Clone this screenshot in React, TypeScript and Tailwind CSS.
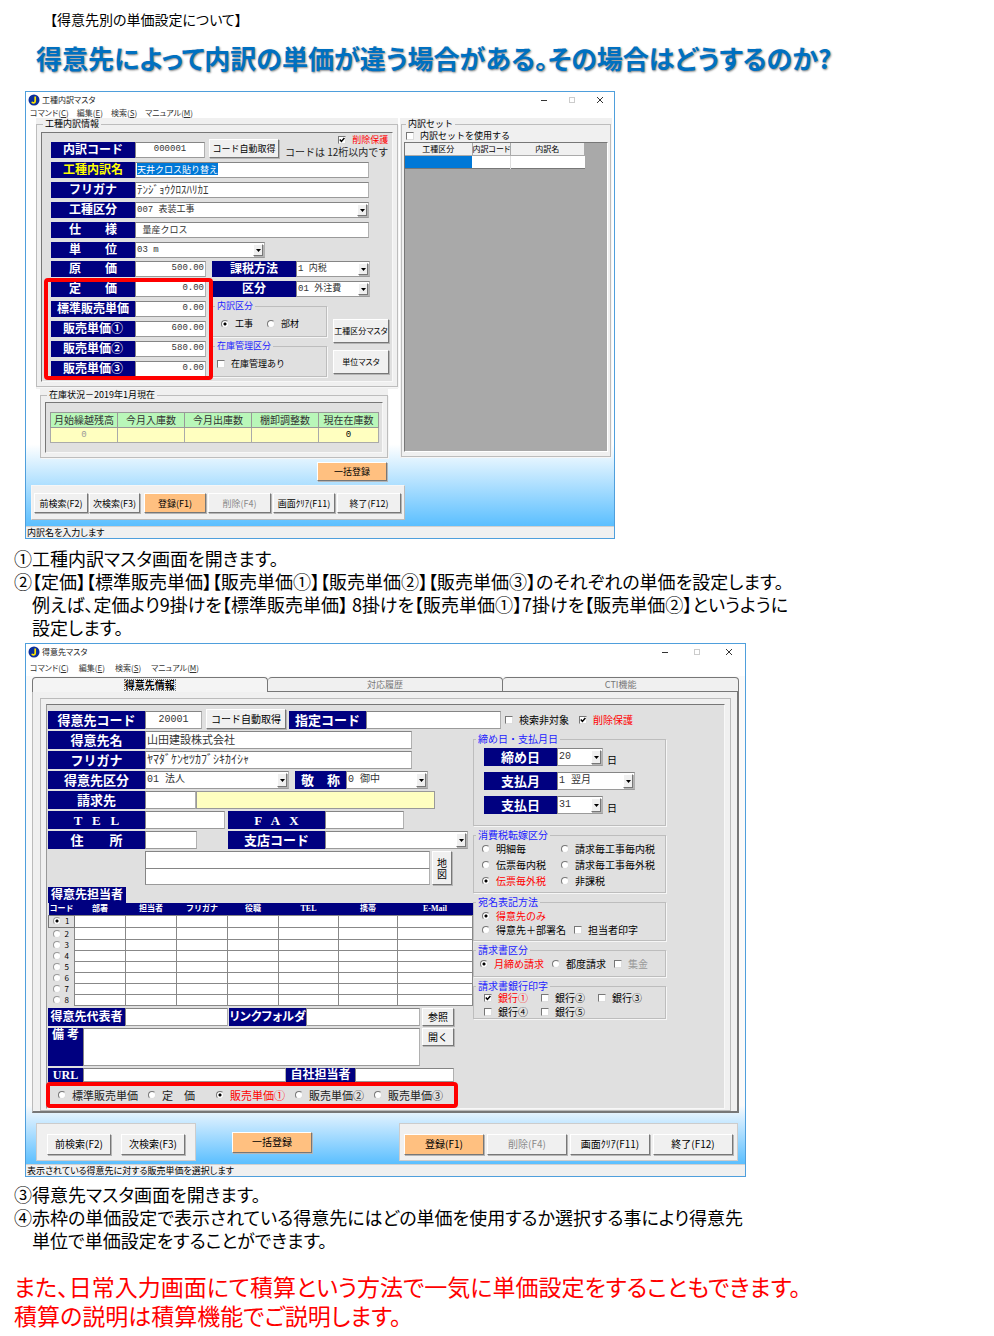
import type { ReactNode } from "react";
import clsx from "clsx";

const gothic = "font-['Noto_Sans_CJK_JP',sans-serif]";
const palt = "[font-feature-settings:'palt']";
const mincho = "font-['Liberation_Serif','Noto_Sans_CJK_JP',serif]";
const mono = "font-['Liberation_Mono','Noto_Sans_CJK_JP',monospace]";

const fieldBorder =
  "border border-[#858585] border-r-[#b0b0b0] border-b-[#9a9a9a] bg-white";
const bevel =
  "border border-t-white border-l-white border-r-[#777] border-b-[#777] shadow-[1px_1px_0_#b5b5b5]";

function Tag({
  children,
  className,
  htmlFor,
}: {
  children: ReactNode;
  className?: string;
  htmlFor?: string;
}) {
  return (
    <label
      htmlFor={htmlFor}
      className={clsx(
        "flex shrink-0 items-center justify-center whitespace-pre bg-[#000080] font-bold leading-none",
        mincho,
        !className?.includes("text-[#ff0]") && "text-white",
        className,
      )}
    >
      {children}
    </label>
  );
}

function Field({
  id,
  value = "",
  className,
  label,
}: {
  id?: string;
  value?: string;
  className?: string;
  label?: string;
}) {
  return (
    <input
      id={id}
      type="text"
      aria-label={label}
      defaultValue={value}
      className={clsx(
        "block min-w-0 shrink-0 px-px pb-0.5 leading-none text-[#333] outline-none",
        fieldBorder,
        mono,
        className,
      )}
    />
  );
}

function Select({
  id,
  value = "",
  className,
}: {
  id: string;
  value?: string;
  className?: string;
}) {
  return (
    <div className={clsx("relative shrink-0", className)}>
      <select
        id={id}
        className={clsx(
          "block size-full appearance-none whitespace-pre pl-px leading-[14px] text-[#333] outline-none",
          fieldBorder,
          mono,
        )}
      >
        <option>{value}</option>
      </select>
      <span
        className={clsx(
          "pointer-events-none absolute inset-y-0.5 right-0.5 flex w-2.5 items-center justify-center bg-[#f0f0f0]",
          bevel,
        )}
      >
        <svg viewBox="0 0 5 3" className="h-[3px] w-[5px]">
          <path d="M0 0h5L2.5 3z" fill="#000" />
        </svg>
      </span>
    </div>
  );
}

function Btn({
  children,
  className,
  tone = "plain",
}: {
  children: ReactNode;
  className?: string;
  tone?: "plain" | "orange" | "off";
}) {
  return (
    <button
      type="button"
      disabled={tone === "off"}
      className={clsx(
        "flex shrink-0 items-center justify-center whitespace-nowrap leading-none",
        bevel,
        tone === "orange" ? "bg-[#ffc080]" : "bg-[#f0f0f0]",
        tone === "off" ? "text-[#8a8a8a]" : "text-black",
        className,
      )}
    >
      {children}
    </button>
  );
}

function Choice({
  type,
  name,
  on,
  off,
  children,
  className,
}: {
  type: "radio" | "checkbox";
  name?: string;
  on?: boolean;
  off?: boolean;
  children: ReactNode;
  className?: string;
}) {
  return (
    <label
      className={clsx(
        "flex items-center gap-1.5 whitespace-pre leading-none",
        on && "text-[#f00]",
        off && "text-[#9a9a9a]",
        className,
      )}
    >
      <span className="relative flex size-2 shrink-0">
        <input
          type={type}
          name={name}
          defaultChecked={on}
          disabled={off}
          className={clsx(
            "peer size-2 appearance-none border border-t-[#777] border-l-[#777] border-r-[#ddd] border-b-[#ddd] bg-white",
            type === "radio" &&
              "rounded-full checked:bg-[radial-gradient(circle,#000_0_1px,#fff_2px)]",
          )}
        />
        {type === "checkbox" && (
          <svg
            viewBox="0 0 8 8"
            className="pointer-events-none absolute inset-0 hidden size-2 peer-checked:block"
          >
            <path d="M1.8 3.6 3.4 5.4 6.4 2" fill="none" stroke="#000" strokeWidth="1.5" />
          </svg>
        )}
      </span>
      {children}
    </label>
  );
}

function Group({
  title,
  children,
  className,
  dark,
}: {
  title: string;
  children: ReactNode;
  className?: string;
  dark?: boolean;
}) {
  return (
    <fieldset className={clsx("min-w-0 border border-[#bdbdbd] shadow-[1px_1px_0_#f6f6f6]", className)}>
      <legend
        className={clsx(
          "ml-0.5 whitespace-pre px-0.5 leading-[10px]",
          dark ? "text-black" : "text-[#22f]",
        )}
      >
        {title}
      </legend>
      {children}
    </fieldset>
  );
}

const menus = [
  ["コマンド", "C"],
  ["編集", "E"],
  ["検索", "S"],
  ["マニュアル", "M"],
];

function AppWindow({
  title,
  status,
  children,
  className,
  bar,
  controls,
}: {
  title: string;
  status: string;
  children: ReactNode;
  className?: string;
  bar: string;
  controls: string;
}) {
  return (
    <section className={clsx("flex w-full flex-col border border-[#4f9fdc] bg-white", className)}>
      <header className="flex h-4 items-center pl-0.5 text-[8px] leading-none text-[#222]">
        <svg viewBox="0 0 12 12" className="mr-0.5 size-3">
          <circle cx="6" cy="6" r="5.5" fill="#0b2f9b" />
          <path
            d="M7.2 2.6v4.6a1.7 1.7 0 0 1-3.3.5"
            fill="none"
            stroke="#ffe600"
            strokeWidth="1.7"
          />
        </svg>
        <h2 className={palt}>{title}</h2>
        <div className={clsx("ml-auto flex items-center", controls)}>
          <svg viewBox="0 0 8 8" className="size-2">
            <path d="M1 4.5h6" stroke="#333" />
          </svg>
          <svg viewBox="0 0 8 8" className="size-2">
            <rect x="1.5" y="1.5" width="5" height="5" fill="none" stroke="#ccc" />
          </svg>
          <svg viewBox="0 0 8 8" className="size-2">
            <path d="M1 1l6 6M7 1 1 7" stroke="#333" />
          </svg>
        </div>
      </header>
      <nav className={clsx("flex shrink-0 items-center pl-1 text-[8px] leading-none text-[#333]", palt, bar)}>
        {menus.map(([name, key]) => (
          <span key={key}>
            {name}(<u>{key}</u>)
          </span>
        ))}
      </nav>
      {children}
      <footer className="flex h-3 shrink-0 items-center border-t border-[#d0d0d0] bg-[#f0f0f0] pl-px text-[9px] leading-none">
        <p className={palt}>{status}</p>
      </footer>
    </section>
  );
}

const prices = [
  { id: "p0", label: "定　　価", value: "0.00" },
  { id: "p1", label: "標準販売単価", value: "0.00" },
  { id: "p2", label: "販売単価①", value: "600.00" },
  { id: "p3", label: "販売単価②", value: "580.00" },
  { id: "p4", label: "販売単価③", value: "0.00" },
];

const stock = ["月始繰越残高", "今月入庫数", "今月出庫数", "棚卸調整数", "現在在庫数"];

function ItemMaster() {
  const tag = "h-4 w-[84px] text-[12px]";
  const field = "h-4 text-[9px]";
  return (
    <AppWindow
      title="工種内訳マスタ"
      status="内訳名を入力します"
      className="max-w-[590px]"
      bar="h-2.5 gap-2"
      controls="gap-5 pr-2.5"
    >
      <div className="bg-[linear-gradient(#fff_0_80%,#5bbfff)] text-[9px]">
        <div className="flex items-start gap-0.5 pl-2.5 pr-0.5">
          <div className="w-[362px] shrink-0">
            <div className="bg-[#f0f0f0] pb-0.5 pt-px">
              <Group title="工種内訳情報" dark className="px-1 pb-1 pt-[3px]">
                <div className="flex flex-col gap-1 border border-t-[#777] border-l-[#777] border-r-[#f8f8f8] border-b-[#f8f8f8] bg-[#e0e0e0] pb-1 pl-[9px] pt-px">
                  <div className="flex h-6 items-end">
                    <Tag className={tag} htmlFor="code">内訳コード</Tag>
                    <Field id="code" value="000001" className={clsx(field, "w-[70px] text-center")} />
                    <Btn className="ml-1 h-[19px] w-[70px]">コード自動取得</Btn>
                    <div className="ml-1.5 flex flex-col items-end">
                      <Choice type="checkbox" on className="h-[11px] gap-1">削除保護</Choice>
                      <p className="whitespace-nowrap text-[10px] leading-[13px] text-[#222]">
                        コードは 12桁以内です
                      </p>
                    </div>
                  </div>
                  <div className="flex">
                    <Tag className={clsx(tag, "text-[#ff0]")} htmlFor="item">工種内訳名</Tag>
                    <div className={clsx("h-4 w-[234px] px-px", fieldBorder)}>
                      <input
                        id="item"
                        type="text"
                        defaultValue="天井クロス貼り替え"
                        className="block h-3 bg-[#0078d7] leading-none text-white outline-none field-sizing-content"
                      />
                    </div>
                  </div>
                  <div className="flex">
                    <Tag className={tag} htmlFor="kana">フリガナ</Tag>
                    <Field id="kana" value="ﾃﾝｼﾞｮｳｸﾛｽﾊﾘｶｴ" className="h-4 w-[234px] text-[11px]" />
                  </div>
                  <div className="flex">
                    <Tag className={tag} htmlFor="kind">工種区分</Tag>
                    <Select id="kind" value="007 表装工事" className={clsx(field, "w-[234px]")} />
                  </div>
                  <div className="flex">
                    <Tag className={tag} htmlFor="spec">仕　　様</Tag>
                    <Field id="spec" value=" 量産クロス" className={clsx(field, "w-[234px]")} />
                  </div>
                  <div className="flex">
                    <Tag className={tag} htmlFor="unit">単　　位</Tag>
                    <Select id="unit" value="03  m" className={clsx(field, "w-[130px]")} />
                  </div>
                  <div className="-mt-px flex gap-1.5">
                    <div className="flex flex-col gap-1">
                      <div className="flex">
                        <Tag className={tag} htmlFor="cost">原　　価</Tag>
                        <Field id="cost" value="500.00" className={clsx(field, "w-[71px] text-right")} />
                      </div>
                      <div className="relative flex flex-col gap-1">
                        {prices.map((p) => (
                          <div key={p.id} className="flex">
                            <Tag className={tag} htmlFor={p.id}>{p.label}</Tag>
                            <Field id={p.id} value={p.value} className={clsx(field, "w-[71px] text-right")} />
                          </div>
                        ))}
                        <span className="pointer-events-none absolute -inset-x-[7px] -bottom-[3px] -top-[3px] rounded-sm border-4 border-[#f00]" />
                      </div>
                    </div>
                    <div className="flex flex-col gap-1">
                      <div className="flex">
                        <Tag className={tag} htmlFor="tax">課税方法</Tag>
                        <Select id="tax" value="1 内税" className={clsx(field, "w-[74px]")} />
                      </div>
                      <div className="flex">
                        <Tag className={tag} htmlFor="class">区分</Tag>
                        <Select id="class" value="01 外注費" className={clsx(field, "w-[74px]")} />
                      </div>
                      <div className="flex gap-1.5">
                        <div className="flex w-[115px] flex-col gap-1">
                          <Group title="内訳区分" className="h-9">
                            <div className="flex gap-3.5 pl-2 pt-2">
                              <Choice type="radio" name="naiyaku" on className="gap-1">
                                <span className="text-black">工事</span>
                              </Choice>
                              <Choice type="radio" name="naiyaku">部材</Choice>
                            </div>
                          </Group>
                          <Group title="在庫管理区分" className="h-9">
                            <Choice type="checkbox" className="pl-1 pt-2">在庫管理あり</Choice>
                          </Group>
                        </div>
                        <div className="flex flex-col gap-[7px] pt-[18px] text-[8px]">
                          <Btn className={clsx("h-6 w-14", palt)}>工種区分マスタ</Btn>
                          <Btn className={clsx("h-6 w-14", palt)}>単位マスタ</Btn>
                        </div>
                      </div>
                    </div>
                  </div>
                </div>
              </Group>
            </div>
            <div className="ml-1 w-[348px] bg-[#f0f0f0] pt-px">
              <Group title="在庫状況－2019年1月現在" dark className="px-1 pb-1 pt-0.5">
                <div className="border border-t-[#777] border-l-[#777] border-r-[#f8f8f8] border-b-[#f8f8f8] bg-[#e0e0e0] py-[9px] pl-1 pr-1">
                  <table className="w-full table-fixed border-collapse text-center leading-none">
                    <thead>
                      <tr className="h-[15px] bg-[#b9f7b9] text-[10px]">
                        {stock.map((s, i) => (
                          <th
                            key={s}
                            className={clsx(
                              "whitespace-nowrap border border-[#999] p-0 font-normal text-[#333]",
                              i === 4 ? "w-[60px]" : "w-[67px]",
                            )}
                          >
                            {s}
                          </th>
                        ))}
                      </tr>
                    </thead>
                    <tbody>
                      <tr className="h-[15px] bg-[#ffffc0]">
                        {["0", "", "", "", "0"].map((v, i) => (
                          <td
                            key={i}
                            className={clsx("border border-[#aaa] p-0", mono, i === 0 && "text-[#999]")}
                          >
                            {v}
                          </td>
                        ))}
                      </tr>
                    </tbody>
                  </table>
                </div>
              </Group>
            </div>
          </div>
          <div className="flex min-w-0 grow self-stretch bg-[#f0f0f0] p-px">
            <Group title="内訳セット" dark className="flex w-full flex-col px-0.5 pb-0.5">
              <div className="flex h-[323px] flex-col">
                <Choice type="checkbox" className="h-[13px] shrink-0 gap-1 pl-0.5">内訳セットを使用する</Choice>
                <div className="grow border border-[#777] border-r-white border-b-white bg-[#a9a9a9]">
                  <table className="w-[180px] table-fixed border-collapse text-center text-[8px] leading-none">
                    <thead>
                      <tr className="h-3 bg-[#f0f0f0]">
                        <th className="w-[67px] border-r border-b border-[#aaa] p-0 font-normal">工種区分</th>
                        <th className="w-[38px] whitespace-nowrap border-r border-b border-[#aaa] p-0 font-normal">
                          <span className={palt}>内訳コード</span>
                        </th>
                        <th className="border-r border-b border-[#aaa] p-0 font-normal">内訳名</th>
                      </tr>
                    </thead>
                    <tbody>
                      <tr className="h-[13px] border-b border-[#777] bg-white">
                        <td className="bg-[#0078d7]" />
                        <td className="border-r border-[#ddd]" />
                        <td />
                      </tr>
                    </tbody>
                  </table>
                </div>
              </div>
            </Group>
          </div>
        </div>
        <div className="flex pl-[291px] pt-1">
          <Btn tone="orange" className="h-[19px] w-[70px]">一括登録</Btn>
        </div>
        <div className="px-[5px] pb-1.5 pt-1">
          <div className="flex w-[374px] items-center border border-t-[#f6f6f6] border-l-[#f6f6f6] border-[#bbb] bg-[#f0f0f0] pb-1.5 pl-0.5 pt-[7px]">
            <Btn className="h-5 w-[54px]">前検索(F2)</Btn>
            <Btn className="ml-px h-5 w-[51px]">次検索(F3)</Btn>
            <Btn tone="orange" className="ml-1 h-5 w-[62px]">登録(F1)</Btn>
            <Btn tone="off" className="ml-0.5 h-5 w-[63px]">削除(F4)</Btn>
            <Btn className="ml-0.5 h-5 w-[62px]">画面ｸﾘｱ(F11)</Btn>
            <Btn className="ml-0.5 h-5 w-[64px]">終了(F12)</Btn>
          </div>
        </div>
      </div>
    </AppWindow>
  );
}

const contactCols = [
  { name: "コード", w: "w-[26px]" },
  { name: "部署", w: "w-[51px]" },
  { name: "担当者", w: "w-[51px]" },
  { name: "フリガナ", w: "w-[51px]" },
  { name: "役職", w: "w-[51px]" },
  { name: "TEL", w: "w-[60px]" },
  { name: "携帯", w: "w-[59px]" },
  { name: "E-Mail", w: "w-[75px]" },
];

function CustomerForm() {
  const tag = "h-[18px] w-[97px] text-[13px]";
  const field = "h-[18px] text-[10px]";
  return (
    <div className="border border-t-[#777] border-l-[#999] border-r-[#f8f8f8] border-b-[#f8f8f8] bg-[#e0e0e0] pl-px text-[10px]">
      <div className="flex h-6 items-end">
        <Tag className={tag} htmlFor="cust">得意先コード</Tag>
        <Field id="cust" value="20001" className={clsx(field, "w-[57px] text-center")} />
        <Btn className="ml-1 h-5 w-[80px]">コード自動取得</Btn>
        <Tag className="ml-[3px] h-[18px] w-[77px] text-[13px]" htmlFor="desig">指定コード</Tag>
        <Field id="desig" className={clsx(field, "w-[135px]")} />
        <Choice type="checkbox" className="ml-1 h-[18px]">検索非対象</Choice>
        <Choice type="checkbox" on className="ml-2.5 h-[18px]">削除保護</Choice>
      </div>
      <div className="flex">
        <div className="flex w-[425px] shrink-0 flex-col gap-0.5 pt-0.5">
          <div className="flex">
            <Tag className={tag} htmlFor="cname">得意先名</Tag>
            <Field id="cname" value="山田建設株式会社" className="h-[18px] w-[267px] text-[11px]" />
          </div>
          <div className="flex">
            <Tag className={tag} htmlFor="ckana">フリガナ</Tag>
            <Field id="ckana" value="ﾔﾏﾀﾞｹﾝｾﾂｶﾌﾞｼｷｶｲｼｬ" className="h-[18px] w-[267px] text-[12px]" />
          </div>
          <div className="flex">
            <Tag className={tag} htmlFor="ckind">得意先区分</Tag>
            <Select id="ckind" value="01  法人" className={clsx(field, "w-[144px]")} />
            <Tag className="ml-1.5 h-[18px] w-[51px] text-[13px]" htmlFor="hon">敬　称</Tag>
            <Select id="hon" value="0  御中" className={clsx(field, "w-[82px]")} />
          </div>
          <div className="flex">
            <Tag className={tag} htmlFor="bill">請求先</Tag>
            <Field id="bill" className={clsx(field, "w-[51px]")} />
            <div className="h-[18px] w-[239px] border border-[#999] bg-[#ffffc0]" />
          </div>
          <div className="flex">
            <Tag className={tag} htmlFor="tel">T   E   L</Tag>
            <Field id="tel" className={clsx(field, "w-[80px]")} />
            <Tag className={clsx(tag, "ml-[3px]")} htmlFor="fax">F   A   X</Tag>
            <Field id="fax" className={clsx(field, "w-[79px]")} />
          </div>
          <div className="flex">
            <Tag className={tag} htmlFor="addr">住　　所</Tag>
            <Field id="addr" className={clsx(field, "w-[52px]")} />
            <Tag className={clsx(tag, "ml-[31px]")} htmlFor="branch">支店コード</Tag>
            <Select id="branch" className={clsx(field, "w-[143px]")} />
          </div>
          <div className="flex pl-[97px]">
            <div>
              <Field label="住所1" className={clsx(field, "w-[285px]")} />
              <Field label="住所2" className="-mt-px h-[17px] w-[285px] text-[10px]" />
            </div>
            <Btn className="ml-0.5 h-[34px] w-5">
              <span className="w-2.5 whitespace-normal leading-[11px]">地図</span>
            </Btn>
          </div>
          <div>
            <h3 className={clsx("flex h-4 w-[78px] items-center justify-center bg-[#000080] text-[12px] font-bold leading-none text-white", mincho)}>
              得意先担当者
            </h3>
            <table className="h-[103px] w-[424px] table-fixed border-collapse">
              <thead>
                <tr className={clsx("h-3 bg-[#000080] text-[8px] leading-none text-white", mincho)}>
                  {contactCols.map((c) => (
                    <th key={c.name} className={clsx("whitespace-nowrap p-0 text-center font-bold", c.w)}>
                      {c.name}
                    </th>
                  ))}
                </tr>
              </thead>
              <tbody className="leading-none">
                {[1, 2, 3, 4, 5, 6, 7, 8].map((n) => (
                  <tr key={n}>
                    <td className={clsx("p-0 text-[8px]", n === 1 && "border border-[#777]")}>
                      <label className="flex items-center gap-1 pl-1">
                        <input
                          type="radio"
                          name="contact"
                          defaultChecked={n === 1}
                          className="size-2 appearance-none rounded-full border border-[#999] border-r-[#ddd] border-b-[#ddd] bg-white checked:bg-[radial-gradient(circle,#000_0_1px,#fff_2px)]"
                        />
                        {n}
                      </label>
                    </td>
                    {contactCols.slice(1).map((c) => (
                      <td key={c.name} className="border border-[#888] bg-white p-0" />
                    ))}
                  </tr>
                ))}
              </tbody>
            </table>
          </div>
          <div className="flex items-center">
            <Tag className="h-[18px] w-[77px] text-[12px]" htmlFor="rep">得意先代表者</Tag>
            <Field id="rep" className={clsx(field, "w-[103px]")} />
            <Tag className={clsx("ml-px h-[18px] w-[77px] text-[12px]", palt)} htmlFor="link">リンクフォルダ</Tag>
            <Field id="link" className={clsx(field, "w-[114px]")} />
            <Btn className="ml-0.5 h-[18px] w-8">参照</Btn>
          </div>
          <div className="flex items-start">
            <Tag className="h-[38px] w-[35px] items-start pt-px text-[12px]" htmlFor="memo">備 考</Tag>
            <textarea id="memo" className={clsx("block h-[38px] w-[337px] resize-none outline-none", fieldBorder)} />
            <Btn className="ml-0.5 h-[18px] w-8">開く</Btn>
          </div>
          <div className="flex">
            <Tag className="h-3.5 w-[35px] text-[12px]" htmlFor="url">URL</Tag>
            <Field id="url" className="h-3.5 w-[203px] text-[9px]" />
            <Tag className="h-3.5 w-[69px] text-[12px]" htmlFor="staff">自社担当者</Tag>
            <Field id="staff" className="h-3.5 w-[99px] text-[9px]" />
          </div>
          <div className="-ml-0.5 -mt-0.5 flex h-[26px] w-[412px] items-center gap-2.5 rounded-sm border-4 border-[#f00] pl-2 text-[11px] text-[#222]">
            <Choice type="radio" name="tanka" className="gap-1">標準販売単価</Choice>
            <Choice type="radio" name="tanka" className="gap-1">定　価　</Choice>
            <Choice type="radio" name="tanka" on className="gap-1">販売単価①</Choice>
            <Choice type="radio" name="tanka" className="gap-1">販売単価②</Choice>
            <Choice type="radio" name="tanka" className="gap-1">販売単価③</Choice>
          </div>
        </div>
        <div className="flex w-[193px] shrink-0 flex-col gap-1 pt-[5px]">
          <Group title="締め日・支払月日" className="h-[92px]">
            <div className="flex flex-col gap-1.5 pl-2.5 pt-1">
              <div className="flex items-end">
                <Tag className="h-[18px] w-[73px] text-[13px]" htmlFor="close">締め日</Tag>
                <Select id="close" value="20" className={clsx(field, "w-[46px]")} />
                <span className="ml-1 leading-[12px]">日</span>
              </div>
              <div className="flex">
                <Tag className="h-[18px] w-[73px] text-[13px]" htmlFor="paym">支払月</Tag>
                <Select id="paym" value="1 翌月" className={clsx(field, "w-[78px]")} />
              </div>
              <div className="flex items-end">
                <Tag className="h-[18px] w-[73px] text-[13px]" htmlFor="payd">支払日</Tag>
                <Select id="payd" value="31" className={clsx(field, "w-[46px]")} />
                <span className="ml-1 leading-[12px]">日</span>
              </div>
            </div>
          </Group>
          <Group title="消費税転嫁区分" className="h-[63px]">
            <div className="grid grid-cols-[79px_auto] gap-y-1.5 pl-2 pt-1">
              <Choice type="radio" name="zei">明細毎</Choice>
              <Choice type="radio" name="zei" className="gap-1">請求毎工事毎内税</Choice>
              <Choice type="radio" name="zei">伝票毎内税</Choice>
              <Choice type="radio" name="zei" className="gap-1">請求毎工事毎外税</Choice>
              <Choice type="radio" name="zei" on>伝票毎外税</Choice>
              <Choice type="radio" name="zei" className="gap-1">非課税</Choice>
            </div>
          </Group>
          <Group title="宛名表記方法" className="h-11">
            <div className="flex flex-col gap-1 pl-2 pt-1">
              <Choice type="radio" name="atena" on>得意先のみ</Choice>
              <div className="flex gap-2">
                <Choice type="radio" name="atena">得意先＋部署名</Choice>
                <Choice type="checkbox" className="gap-1">担当者印字</Choice>
              </div>
            </div>
          </Group>
          <Group title="請求書区分" className="h-8">
            <div className="flex gap-2 pl-1.5 pt-1">
              <Choice type="radio" name="seikyu" on>月締め請求</Choice>
              <Choice type="radio" name="seikyu" className="gap-1">都度請求</Choice>
              <Choice type="checkbox" off className="gap-1">集金</Choice>
            </div>
          </Group>
          <Group title="請求書銀行印字" className="h-[38px]">
            <div className="grid grid-cols-[57px_57px_57px] gap-y-1 pl-2.5 pt-0.5">
              <Choice type="checkbox" on>銀行①</Choice>
              <Choice type="checkbox">銀行②</Choice>
              <Choice type="checkbox">銀行③</Choice>
              <Choice type="checkbox">銀行④</Choice>
              <Choice type="checkbox">銀行⑤</Choice>
            </div>
          </Group>
        </div>
      </div>
    </div>
  );
}

function CustomerMaster() {
  return (
    <AppWindow
      title="得意先マスタ"
      status="表示されている得意先に対する販売単価を選択します"
      className="max-w-[721px]"
      bar="h-4 gap-2.5"
      controls="gap-6 pr-3"
    >
      <div className="bg-[linear-gradient(#fafafa_0_88%,#cfebff_91%,#5bbfff)] px-1.5 pb-[3px] pt-px text-[10px]">
        <div role="tablist" className="grid grid-cols-3 leading-none">
          <button
            type="button"
            role="tab"
            aria-selected="true"
            className="flex h-[15px] items-center justify-center rounded-t border border-b-0 border-[#777] bg-[#f4f4f4] font-bold"
          >
            <span className="border border-dotted border-[#777]">得意先情報</span>
          </button>
          {["対応履歴", "CTI機能"].map((t) => (
            <button
              key={t}
              type="button"
              role="tab"
              aria-selected="false"
              className="h-[15px] rounded-t border border-l-0 border-[#777] bg-[#f0f0f0] text-[9px] text-[#777]"
            >
              {t}
            </button>
          ))}
        </div>
        <div className="border-2 border-t-0 border-l border-[#777] border-l-[#bbb] bg-[#f0f0f0] pl-[7px] pr-1.5 pt-1.5">
          <div className="border border-[#bbb] p-[5px] pb-px">
            <CustomerForm />
          </div>
        </div>
        <div className="flex items-center pt-2.5">
          <div className="ml-1 flex h-[38px] w-[160px] items-center gap-2.5 border border-[#ccc] bg-[#f0f0f0] pl-2.5 pt-1">
            <Btn className="h-[21px] w-16">前検索(F2)</Btn>
            <Btn className="h-[21px] w-16">次検索(F3)</Btn>
          </div>
          <Btn tone="orange" className="ml-9 h-[21px] w-20">一括登録</Btn>
          <div className="ml-auto mr-px flex h-[38px] items-center gap-[3px] border border-[#ccc] bg-[#f0f0f0] pl-1 pr-1 pt-1">
            <Btn tone="orange" className="h-[21px] w-20">登録(F1)</Btn>
            <Btn tone="off" className="h-[21px] w-20">削除(F4)</Btn>
            <Btn className="h-[21px] w-20">画面ｸﾘｱ(F11)</Btn>
            <Btn className="h-[21px] w-20">終了(F12)</Btn>
          </div>
        </div>
      </div>
    </AppWindow>
  );
}

export default function App() {
  return (
    <main lang="ja" className={clsx("min-h-screen bg-white pl-[14px] pt-[11px] text-black", gothic)}>
      <p className={clsx("pl-9 text-[14px] leading-4", palt)}>【得意先別の単価設定について】</p>
      <h1
        className={clsx(
          "mt-[15px] pl-[22px] text-[26px] font-bold leading-8 text-[#0070c0] [text-shadow:1px_1px_2px_#888]",
          palt,
        )}
      >
        得意先によって内訳の単価が違う場合がある。その場合はどうするのか?
      </h1>
      <div className="mt-[17px] pl-[11px]">
        <ItemMaster />
      </div>
      <div className={clsx("mt-2 text-[18px] leading-[23px]", palt)}>
        <p>①工種内訳マスタ画面を開きます。</p>
        <p>②【定価】【標準販売単価】【販売単価①】【販売単価②】【販売単価③】のそれぞれの単価を設定します。</p>
        <p>　例えば、定価より9掛けを【標準販売単価】 8掛けを【販売単価①】7掛けを【販売単価②】というように</p>
        <p>　設定します。</p>
      </div>
      <div className="mt-1 pl-[11px]">
        <CustomerMaster />
      </div>
      <div className={clsx("mt-1.5 text-[18px] leading-[23px]", palt)}>
        <p>③得意先マスタ画面を開きます。</p>
        <p>④赤枠の単価設定で表示されている得意先にはどの単価を使用するか選択する事により得意先</p>
        <p>　単位で単価設定をすることができます。</p>
      </div>
      <div className={clsx("mt-5 text-[23px] leading-[29px] text-[#f00]", palt)}>
        <p>また、日常入力画面にて積算という方法で一気に単価設定をすることもできます。</p>
        <p>積算の説明は積算機能でご説明します。</p>
      </div>
    </main>
  );
}
